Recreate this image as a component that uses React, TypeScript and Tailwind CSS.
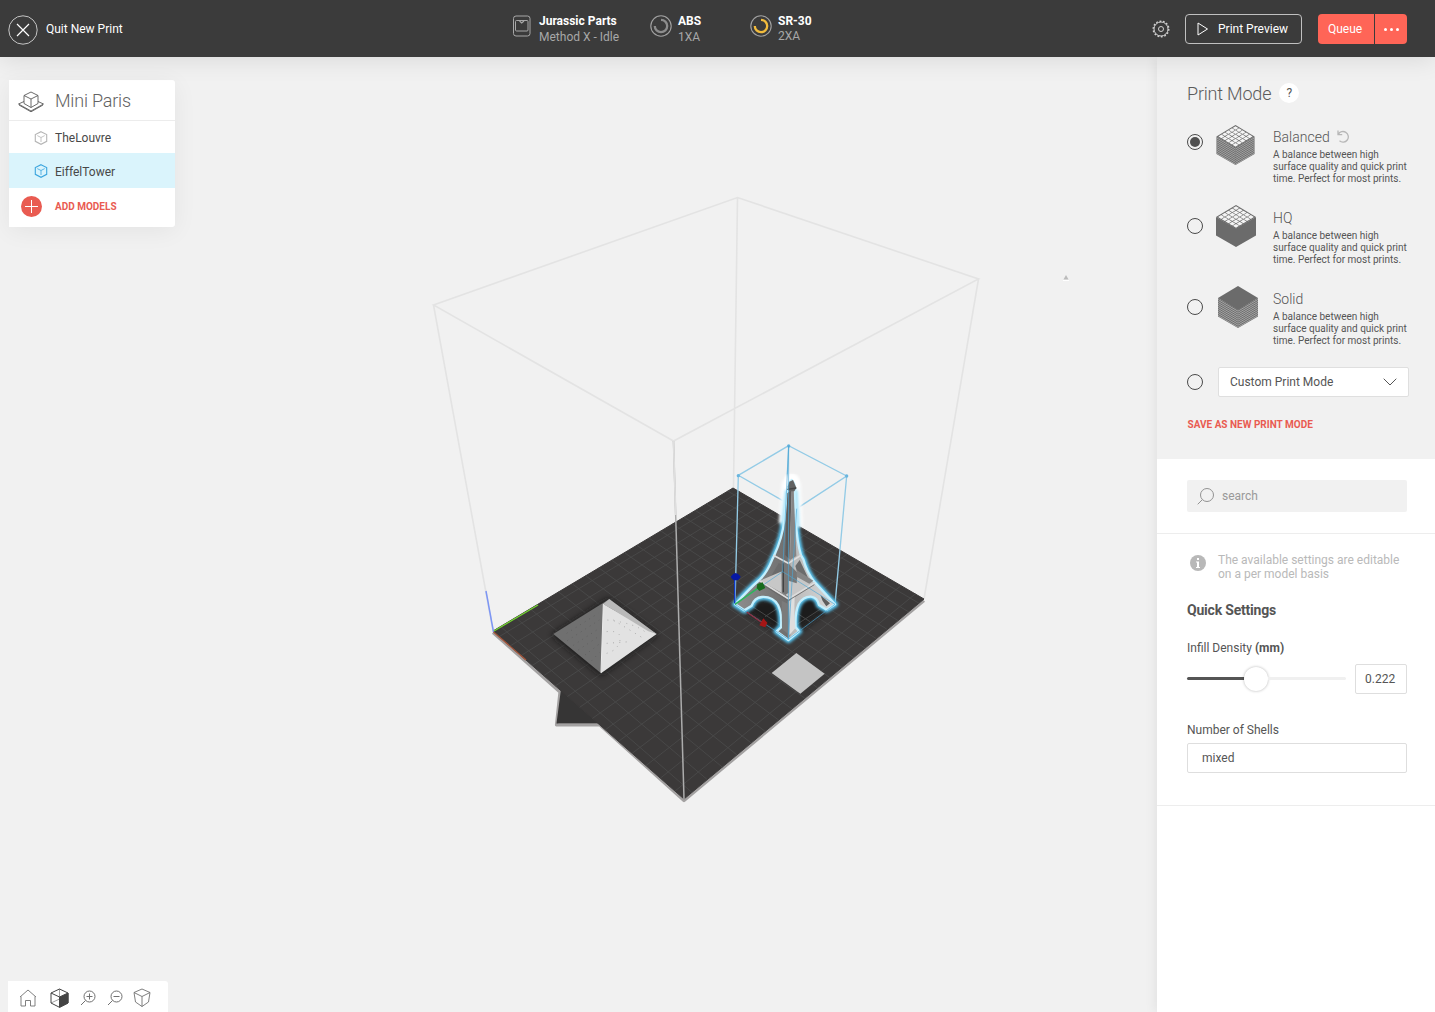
import React from "react";

type Pt = [number, number];

const PLATE = {
  left: [493, 631] as Pt,
  back: [733, 488] as Pt,
  right: [924, 599] as Pt,
  front: [684, 799] as Pt,
};

// Projects bed coordinates (u along left-front, v along left-back) onto the view.
function project(u: number, v: number): Pt {
  const [x0, y0] = PLATE.left;
  const [x1, y1] = PLATE.front;
  const [x2, y2] = PLATE.right;
  const [x3, y3] = PLATE.back;
  const dx1 = x1 - x2, dx2 = x3 - x2, sx = x0 - x1 + x2 - x3;
  const dy1 = y1 - y2, dy2 = y3 - y2, sy = y0 - y1 + y2 - y3;
  const det = dx1 * dy2 - dx2 * dy1;
  const g = (sx * dy2 - dx2 * sy) / det;
  const h = (dx1 * sy - sx * dy1) / det;
  const w = g * u + h * v + 1;
  return [
    ((x1 - x0 + g * x1) * u + (x3 - x0 + h * x3) * v + x0) / w,
    ((y1 - y0 + g * y1) * u + (y3 - y0 + h * y3) * v + y0) / w,
  ];
}

function segment(a: Pt, b: Pt) {
  return `M${a[0].toFixed(1)} ${a[1].toFixed(1)}L${b[0].toFixed(1)} ${b[1].toFixed(1)}`;
}

const gridPath = [
  ...Array.from({ length: 15 }, (_, i) => {
    const u = (7.6 + i - 7) / 15.2;
    return segment(project(u, 0), project(u, 1));
  }),
  ...Array.from({ length: 19 }, (_, i) => {
    const v = (9.5 + i - 9) / 19;
    return segment(project(0, v), project(1, v));
  }),
].join("");

const TOWER =
  "M275 150L267 160L264 175L258 215L253 270Q247 325 222 378L217 388Q200 430 178 450Q148 476 106 523L133 541L155 527Q163 503 186 501Q218 499 234 525Q247 552 243 592L230 604L265 630L297 604L287 592Q284 550 296 522Q310 499 333 500Q352 503 357 525L380 539L405 523L345 458Q320 428 310 388L303 376Q291 335 287 270L285 215L285 175L282 160Z";

function Scene() {
  return (
    <svg className="absolute inset-0 h-full w-full" viewBox="0 57 1157 955" fill="none">
      <defs>
        <filter id="glow" x="-30%" y="-20%" width="160%" height="140%">
          <feGaussianBlur stdDeviation="4" />
        </filter>
        <filter id="halo" x="-80%" y="-20%" width="260%" height="140%">
          <feGaussianBlur stdDeviation="5" />
        </filter>
        <filter id="shade" x="-30%" y="-30%" width="160%" height="160%">
          <feGaussianBlur stdDeviation="9" />
        </filter>
        <linearGradient id="leg" x1="0" x2="1">
          <stop offset="0" stopColor="#8d8d8d" />
          <stop offset=".52" stopColor="#6f6f6f" />
          <stop offset=".56" stopColor="#b9b9b9" />
          <stop offset="1" stopColor="#d8d8d8" />
        </linearGradient>
      </defs>

      <path d="M433.500 305L737.500 197.500L978.500 279L673.500 441ZM737.500 197.500L733.500 488M433.500 305L493 631M978.500 279L924 599" stroke="#e3e3e3" strokeWidth="1.600" />

      <path d="M493 632.500L560 692L556.500 725H600L684 800.500L924 600.500" stroke="#a3a1a1" strokeWidth="3.200" strokeLinejoin="round" />
      <path d="M561 689L556.500 723.500H600L620 736Z" fill="#363535" />
      <path d="M493 631L733 488L924 599L684 799Z" fill="#3b3939" stroke="#3b3939" strokeLinejoin="round" />
      <path d={gridPath} stroke="#494a49" strokeWidth=".9" />
      <path d="M673.500 441L684 799" stroke="#acacac" strokeWidth="1.500" />
      <path d="M673.500 441L675.700 515" stroke="#dedede" strokeWidth="1.700" />

      <path d="M486 591L493.500 632" stroke="#7d96f4" strokeWidth="1.500" />
      <path d="M494 631L538 605" stroke="#73d431" strokeWidth="1.400" />
      <path d="M493.500 632L526 660" stroke="#a5553a" strokeWidth="1.300" />

      <g transform="translate(470 570) scale(.33333)">
        <path d="M245 195L415 85L562 195L393 316Z" fill="#151515" filter="url(#shade)" opacity=".85" />
        <path d="M250 192L418 87L393 310Z" fill="#707070" />
        <path d="M400 102L560 192L393 310Z" fill="#e2e2e2" />
        <path d="M399 102L418 87L560 192L535 184L430 120Z" fill="#b9b9b9" />
        <path d="M400 102L393 308" stroke="#ececec" strokeWidth="3" />
        <path d="M290 190L385 130M292 212L388 150M310 226L388 175M325 240L388 198M345 255L388 222M365 272L388 248" stroke="#606060" strokeWidth="3" strokeDasharray="3 13" />
        <path d="M412 150Q500 160 530 190M410 185Q455 180 450 210T410 250M430 150L520 205M410 220L480 215" stroke="#ababab" strokeWidth="3" strokeDasharray="3 16" />
      </g>

      <g transform="translate(700 430) scale(.33333)">
        <path d="M266 47L115 136L290 236L440 138ZM266 47L248 425M115 136L105 523M440 138L405 523" stroke="#93cbe6" strokeWidth="4" />
        <circle cx="266" cy="48" r="5" fill="#69b5de" />
        <circle cx="115" cy="137" r="5" fill="#69b5de" />
        <circle cx="440" cy="138" r="5" fill="#69b5de" />
        <path d="M105 523L265 628L405 523L345 480" fill="#1b1b1b" filter="url(#shade)" />
        <path d="M150 525L265 600L380 525M195 560L300 490M230 510L330 575" stroke="#454646" strokeWidth="3" />
        <path d={TOWER} stroke="#5cc9f5" strokeWidth="19" strokeLinejoin="round" filter="url(#glow)" />
        <path d="M251 280Q258 200 260 165Q275 130 287 165Q289 220 293 290" stroke="#fff" strokeWidth="30" strokeLinejoin="round" filter="url(#halo)" />
        <path d="M262 180Q258 145 275 141Q293 145 288 180" stroke="#fff" strokeWidth="22" filter="url(#glow)" />
        <path d="M260 180L248 290M288 180L294 290" stroke="#8fdcf8" strokeWidth="8" filter="url(#glow)" />
        <path d={TOWER} fill="url(#leg)" stroke="#c4effd" strokeWidth="7" strokeLinejoin="round" />
        <path d="M236 400L262 408L262 425L208 448ZM286 408L299 390L326 447L292 428Z" fill="#6b6b6b" />
        <path d="M180 452L248 423L342 458L268 502Z" fill="#c7c7c7" />
        <path d="M246 425L264 400L293 428L290 460L246 446Z" fill="#777" />
        <path d="M262 190L256 375L268 388L275 178Z" fill="#5c5c5c" />
        <path d="M275 180L270 390L289 378L281 180Z" fill="#858585" />
        <path d="M244 390L245 488L256 495L266 488L266 395Z" fill="#777" />
        <path d="M250 400L250 487" stroke="#444" strokeWidth="4" />
        <path d="M290 420L340 452L328 461L290 440Z" fill="#858585" />
        <path d="M220 376L265 400L304 375" stroke="#dedede" strokeWidth="5" />
        <path d="M178 452L265 506L345 458" stroke="#dcdcdc" strokeWidth="5" />
        <path d="M178 458L265 512L343 464" stroke="#666" strokeWidth="2.500" />
        <path d="M268 513L284 501Q282 555 286 595L268 615Z" fill="#dedede" />
        <path d="M245 512L265 522L265 613L246 597Z" fill="#7b7b7b" />
        <path d="M268 155L263 170L266 184H283L289 173L279 150Z" fill="#626262" />
        <path d="M262 178L289 174" stroke="#454545" strokeWidth="4" />
        <path d="M361 495L390 520L379 529L368 513Z" fill="#5d5d5d" />
        <path d="M266 47L248 425L405 523L265 628ZM105 523L248 425M290 236L265 628M105 523L265 628" stroke="#4aa6d3" strokeWidth="3" opacity=".65" />
        <path d="M105 523L180 470" stroke="#30b458" strokeWidth="5" />
        <path d="M172 462L188 457L196 474L178 483L170 474Z" fill="#176b1c" />
        <path d="M104 520V450" stroke="#1238c4" strokeWidth="4" />
        <path d="M92 440Q107 418 122 440Q116 452 107 451Q97 451 92 440Z" fill="#0718a5" />
        <path d="M140 546L183 576" stroke="#8f2f42" strokeWidth="4" />
        <path d="M190 565L178 586L196 592L202 578Z" fill="#a51616" />
        <path d="M289 669L374 731L301 791L215 729Z" fill="#c4c4c4" />
      </g>
      <path d="M1063.500 279.500L1066 275L1068.500 279.500Z" fill="#bbb" />
      <path d="M1063 280.500H1069" stroke="#fff" />
    </svg>
  );
}

function Hexagon({ className, color }: { className: string; color: string }) {
  return (
    <svg className={className} viewBox="0 0 14 14" fill="none" stroke={color}>
      <path d="M7 .7L12.700 3.600V10.300L7 13.300L1.300 10.300V3.600Z" strokeWidth="1.100" />
      <path d="M3.300 4.600L7 6.500L10.700 4.600M7 6.500V11" strokeWidth=".8" />
    </svg>
  );
}

function ModeCube({ grid, layers, className }: { grid: boolean; layers: boolean; className: string }) {
  return (
    <svg className={className} viewBox="0 0 40 42" fill="none">
      <path d="M0 12L20 23.500L40 12V30.500L20 42L0 30.500Z" fill="#6b6b6b" />
      {layers &&
        Array.from({ length: 9 }, (_, i) => (
          <path key={i} d={`M0 ${13.4 + i * 2}L20 ${25.2 + i * 2}L40 ${13.4 + i * 2}`} stroke="#b4b4b4" strokeWidth=".8" />
        ))}
      <path d="M20 0L40 12L20 24L0 12Z" fill="#6b6b6b" />
      {grid &&
        Array.from({ length: 25 }, (_, n) => {
          const a = n % 5;
          const b = Math.floor(n / 5);
          const x = 20 + (a - b) * 3.7;
          const y = 1.2 + (a + b) * 2.22;
          return <path key={n} d={`M${x} ${y}l3.100 1.900l-3.100 1.900l-3.100 -1.900z`} fill="#f4f4f4" />;
        })}
    </svg>
  );
}

function Radio({ checked, className }: { checked?: boolean; className: string }) {
  return (
    <span className={`flex size-4 shrink-0 items-center justify-center rounded-full border border-[#4a4a4a] ${className}`}>
      {checked && <span className="size-2.5 rounded-full bg-[#505050]" />}
    </span>
  );
}

function Spool({ color }: { color: string }) {
  return (
    <svg className="size-[22px]" viewBox="0 0 22 22" fill="none">
      <circle cx="11" cy="11" r="10.200" stroke="#a2a2a2" strokeWidth="1.100" />
      <path d="M11 4.800A6.200 6.200 0 1 1 4.800 11" stroke={color} strokeWidth="2.300" />
    </svg>
  );
}

function Status({ title, sub, className, subClass, children }: { title: string; sub: string; className: string; subClass?: string; children: React.ReactNode }) {
  return (
    <div className={`flex shrink-0 items-start ${className}`}>
      <div className="mt-px">{children}</div>
      <div className="ml-[7px] text-[12px] leading-4 whitespace-nowrap">
        <div className="-mt-1 font-bold text-white">{title}</div>
        <div className={`text-[#a8a8a8] ${subClass ?? ""}`}>{sub}</div>
      </div>
    </div>
  );
}

function Header() {
  return (
    <header className="relative z-20 flex h-[57px] w-full shrink-0 bg-[#3b3b3b] text-[12px] text-white shadow-[0_3px_24px_rgba(0,0,0,0.10)]">
      <div className="flex h-[59px] w-[512px] items-center pl-2">
        <svg className="size-[30px]" viewBox="0 0 30 30" fill="none">
          <circle cx="15" cy="15" r="14.200" stroke="#c4c4c4" />
          <path d="M9 9L21 21M21 9L9 21" stroke="#fff" strokeWidth="1.200" />
        </svg>
        <span className="mb-0.5 ml-2">Quit New Print</span>
      </div>
      <div className="flex w-[640px] pt-[14px]">
        <Status title="Jurassic Parts" sub="Method X - Idle" className="mt-[3px] w-[138px]">
          <svg className="-mt-[3px] h-[22px] w-5" viewBox="0 0 20 22" fill="none" stroke="#a8a8a8">
            <rect x="1.500" y="1" width="16.500" height="20" rx="2.500" />
            <rect x="3.500" y="5.500" width="12.500" height="10.500" rx="1" />
            <path d="M7.500 6L9.700 8L12 6" strokeWidth="1.300" />
          </svg>
        </Status>
        <Status title="ABS" sub="1XA" className="mt-[3px] w-[100px]">
          <div className="-mt-[3px] mr-[-1px]"><Spool color="#8d8d8d" /></div>
        </Status>
        <Status title="SR-30" sub="2XA" className="mt-[3px] w-[100px]" subClass="-mt-px">
          <div className="-mt-[3px] mr-[-1px]"><Spool color="#f2bc3d" /></div>
        </Status>
      </div>
      <div className="flex h-[58px] items-center">
        <svg className="size-[18px]" viewBox="0 0 18 18" fill="none" stroke="#d0d0d0">
          <circle cx="9" cy="9" r="7" />
          <circle cx="9" cy="9" r="7.800" strokeWidth="1.400" strokeDasharray="1.800 1.700" />
          <circle cx="9" cy="9" r="2.500" />
        </svg>
        <button className="ml-[15px] flex h-[30px] w-[117px] items-center rounded border border-[#c0c0c0] pl-[11px] whitespace-nowrap">
          <svg className="mr-[9px] h-[14px] w-3" viewBox="0 0 12 14" fill="none" stroke="#fff">
            <path d="M1 1L10.500 7L1 13Z" />
          </svg>
          Print Preview
        </button>
        <button className="ml-4 h-[30px] w-14 rounded-l bg-[#ff6557] pr-0.5">Queue</button>
        <button className="ml-px flex h-[30px] w-8 items-center justify-center gap-[3px] rounded-r bg-[#ff6557]">
          <i className="size-[3px] rounded-full bg-white" />
          <i className="size-[3px] rounded-full bg-white" />
          <i className="size-[3px] rounded-full bg-white" />
        </button>
      </div>
    </header>
  );
}

function ModelCard() {
  return (
    <section className="relative mt-[23px] ml-[9px] h-[147px] w-[166px] rounded-r-[3px] bg-white text-[12px] text-[#484848] shadow-[0_4px_24px_rgba(0,0,0,0.06)]">
      <div className="flex h-[41px] items-center border-b border-[#ececec] pl-2">
        <svg className="mt-1 h-[22px] w-7" viewBox="0 0 28 22" fill="none" stroke="#5a5a5a" strokeWidth=".9">
          <path d="M7 4.500L14 1L21 4.500V12.500L14 16.500L7 12.500Z" />
          <path d="M7 4.500L14 8L21 4.500M14 8V16.500" />
          <path d="M7 10.500L1.500 13L14 20L26.500 13L21 10.500M2 14L14 20.800L26 14" />
        </svg>
        <h1 className="ml-[10px] text-[18px] font-light tracking-[-0.2px] text-[#626262]">Mini Paris</h1>
      </div>
      <div className="flex h-8 items-center pl-[25px]">
        <Hexagon className="mt-px size-[14px]" color="#b5b5b5" />
        <span className="mt-0.5 ml-[7px]">TheLouvre</span>
      </div>
      <div className="flex h-[34.500px] items-center bg-[#daf4fc] pl-[25px]">
        <Hexagon className="mt-0.5 size-[14px]" color="#3ba5de" />
        <span className="mt-1 ml-[7px]">EiffelTower</span>
      </div>
      <div className="flex h-[38px] items-center pl-3">
        <svg className="size-[21px]" viewBox="0 0 21 21">
          <circle cx="10.500" cy="10.500" r="10.500" fill="#e95b51" />
          <path d="M10.500 4V17M4 10.500H17" stroke="#fff" />
        </svg>
        <span className="ml-[13px] text-[10px] font-bold text-[#e95b51]">ADD MODELS</span>
      </div>
    </section>
  );
}

function ViewBar() {
  return (
    <nav className="relative mt-auto ml-2 flex h-[31px] w-40 items-center rounded-tr-[3px] bg-white pt-0.5 pl-[11px]">
      <svg className="size-[18px]" viewBox="0 0 18 18" fill="none" stroke="#727272" strokeWidth=".9">
        <path d="M1 8L9 1L17 8M2 7.500V17H6.500V11.500H11.500V17H16V7.500" />
      </svg>
      <svg className="ml-[13px] h-5 w-[19px]" viewBox="0 0 19 20" fill="none" stroke="#444">
        <path d="M1 5L9.500 1L18 5V15L9.500 19.300L1 15Z" />
        <path d="M9.500 9L18 5V15L9.500 19.300Z" fill="#444" />
        <path d="M1 5L9.500 9V19" />
        <path d="M1 15L9.500 11M9.500 1V9" strokeWidth=".5" />
      </svg>
      <svg className="ml-[11px] size-4" viewBox="0 0 16 16" fill="none" stroke="#707070">
        <circle cx="9.500" cy="6.500" r="5.500" />
        <path d="M5.500 10.500L1 15M6.500 6.500H12.500M9.500 3.500V9.500" />
      </svg>
      <svg className="ml-[11px] size-4" viewBox="0 0 16 16" fill="none" stroke="#707070">
        <circle cx="9.500" cy="6.500" r="5.500" />
        <path d="M5.500 10.500L1 15M6.500 6.500H12.500" />
      </svg>
      <svg className="ml-[10px] h-5 w-[18px]" viewBox="0 0 18 20" fill="none" stroke="#707070" strokeWidth=".9">
        <path d="M1 4.500L9 1L17 4.500L15.500 14L9 18.500L2.500 14ZM1 4.500L9 8.500L17 4.500M9 8.500V18.500" />
      </svg>
    </nav>
  );
}

function Mode({ name, checked, radio, cube, reset }: { name: string; checked?: boolean; radio: string; cube: React.ReactNode; reset?: boolean }) {
  return (
    <div className="flex h-[81px]">
      <Radio checked={checked} className={radio} />
      <div className="w-[70px] shrink-0">{cube}</div>
      <div className="whitespace-nowrap">
        <div className="flex h-[22px] items-start text-[14px] leading-5 font-light text-[#555]">
          {name}
          {reset && (
            <svg className="mt-[3px] ml-[7px] size-[13px]" viewBox="0 0 13 13" fill="none" stroke="#b7b7b7" strokeWidth="1.300">
              <path d="M1 .5V4.700H5.200M1.300 4.400A5.300 5.300 0 1 1 2.500 10.800" />
            </svg>
          )}
        </div>
        <p className="text-[10px] leading-3 text-[#555]">
          A balance between high<br />surface quality and quick print<br />time. Perfect for most prints.
        </p>
      </div>
    </div>
  );
}

function Sidebar() {
  return (
    <aside className="relative z-10 flex w-[278px] shrink-0 flex-col bg-white text-[12px] text-[#555] shadow-[-3px_0_10px_rgba(0,0,0,0.06)]">
      <section className="h-[402px] bg-[#f1f1f1] pl-[30px]">
        <div className="flex h-[70px] items-center pt-0.5">
          <h2 className="text-[18px] font-light tracking-[-0.2px] text-[#5b5b5b]">Print Mode</h2>
          <span className="ml-2 flex size-5 items-center justify-center rounded-full bg-white">?</span>
        </div>
        <Mode name="Balanced" checked reset radio="mt-[7px]" cube={<ModeCube grid layers className="-mt-0.5 ml-[13px] h-10 w-[39px]" />} />
        <Mode name="HQ" radio="mt-[10px]" cube={<ModeCube grid layers={false} className="-mt-[3px] ml-[13px] h-[42px] w-10" />} />
        <Mode name="Solid" radio="mt-[10px]" cube={<ModeCube grid={false} layers className="-mt-[3px] ml-[15px] h-[42px] w-10" />} />
        <div className="-mt-[3px] flex h-[30px] items-center">
          <Radio className="" />
          <div className="ml-[15px] flex h-[30px] w-[191px] items-center justify-between rounded-xs border border-[#dfdfdf] bg-white pr-[11px] pl-[11px]">
            Custom Print Mode
            <svg className="h-2 w-[14px]" viewBox="0 0 14 8" fill="none" stroke="#555">
              <path d="M.7.7L7 7L13.300.7" />
            </svg>
          </div>
        </div>
        <div className="mt-5 ml-[0.500px] text-[10px] leading-4 font-bold text-[#e95b51]">SAVE AS NEW PRINT MODE</div>
      </section>
      <section className="h-[75px] border-b border-[#ededed] pt-[21px] pl-[30px]">
        <div className="flex h-8 w-[220px] items-center rounded-xs bg-[#f1f1f1] pl-[10px] text-[#999]">
          <svg className="mr-2 size-[17px]" viewBox="0 0 17 17" fill="none" stroke="#929292">
            <circle cx="10" cy="7" r="6.500" />
            <path d="M5.300 11.700L.7 16.300" />
          </svg>
          search
        </div>
      </section>
      <section className="h-[272px] border-b border-[#ededed] pl-[30px]">
        <div className="mt-[19px] flex leading-[14px] text-[#b9b9b9]">
          <svg className="mt-0.5 mr-3 ml-[3px] size-4" viewBox="0 0 16 16">
            <circle cx="8" cy="8" r="8" fill="#b8b8b8" />
            <path d="M7 3H9V5H7ZM6 6.500H9V12H10V13H6V12H7V7.500H6Z" fill="#fff" />
          </svg>
          <p>The available settings are editable<br />on a per model basis</p>
        </div>
        <h3 className="mt-[19px] text-[14px] leading-5 font-bold tracking-[-0.2px]">Quick Settings</h3>
        <div className="mt-5 leading-4">Infill Density <b>(mm)</b></div>
        <div className="mt-2 flex h-[30px] items-center">
          <div className="flex w-[159px] items-center pb-px">
            <div className="h-[3px] w-[58px] rounded-l bg-[#555]" />
            <div className="-ml-px size-6 rounded-full bg-white shadow-[0_0_3px_rgba(0,0,0,0.3)]" />
            <div className="h-[3px] flex-1 rounded-r bg-[#f0f0f0]" />
          </div>
          <div className="ml-[9px] flex h-[30px] w-[52px] items-center rounded-xs border border-[#dedede] pl-[9px]">0.222</div>
        </div>
        <div className="mt-7 leading-4">Number of Shells</div>
        <div className="mt-[5px] flex h-[30px] w-[220px] items-center rounded-xs border border-[#dedede] pl-[14px]">mixed</div>
      </section>
    </aside>
  );
}

export default function App() {
  return (
    <div className="flex h-[1012px] w-[1435px] flex-col overflow-hidden bg-[#f1f1f1] font-['Roboto',sans-serif]">
      <Header />
      <main className="flex min-h-0 flex-1">
        <div className="relative flex flex-1 flex-col">
          <Scene />
          <ModelCard />
          <ViewBar />
        </div>
        <Sidebar />
      </main>
    </div>
  );
}
